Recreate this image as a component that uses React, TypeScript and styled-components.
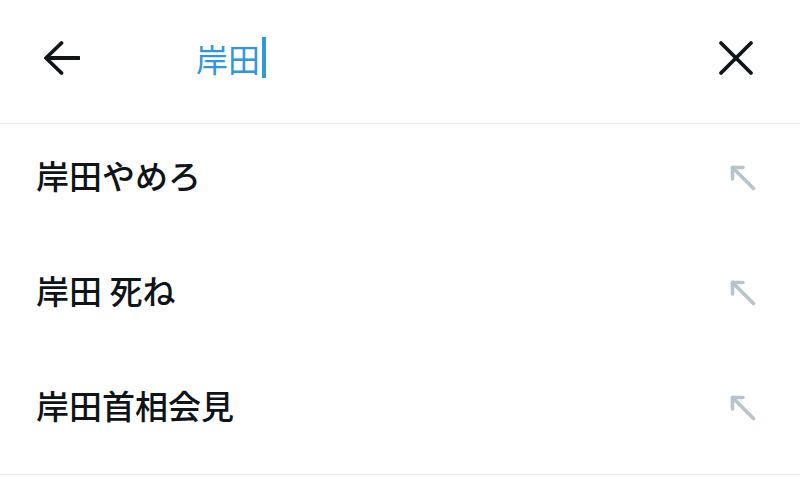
import React from "react";
import styled, { createGlobalStyle } from "styled-components";

const Global = createGlobalStyle`
  html, body { margin: 0; padding: 0; background: #ffffff; }
  body { font-family: "Noto Sans CJK JP", "Noto Sans", sans-serif; }
`;

const Page = styled.div`
  width: 800px;
  height: 483px;
  background: #fff;
  overflow: hidden;
`;

const Header = styled.header`
  height: 124px;
  box-sizing: border-box;
  padding: 0 46px 8px 44px;
  display: flex;
  align-items: center;
  border-bottom: 1px solid #eceff1;
`;

const IconButton = styled.div`
  width: 36px;
  height: 36px;
  display: flex;
  align-items: center;
  justify-content: center;
  color: #0f1419;
  flex: none;
`;

const SearchField = styled.div`
  flex: 1;
  display: flex;
  align-items: center;
  margin-left: 116px;
`;

const Query = styled.span`
  font-size: 32px;
  line-height: 40px;
  color: #2f98da;
  font-weight: 400;
`;

const Caret = styled.span`
  width: 4px;
  height: 41px;
  background: #2f98da;
  margin-left: 2px;
`;

const List = styled.ul`
  list-style: none;
  margin: 0;
  padding: 0 0 5px 0;
  border-bottom: 1px solid #eceff1;
`;

const Row = styled.li`
  height: 115px;
  box-sizing: border-box;
  padding: 0 44px 13px 36px;
  display: flex;
  align-items: center;
  justify-content: space-between;
`;

const Suggestion = styled.span`
  font-size: 33px;
  line-height: 40px;
  color: #0f1419;
  font-weight: 500;
`;

const Glyph = styled.svg`
  display: block;
`;

const BackIcon = () => (
  <Glyph width="36" height="36" viewBox="0 0 36 36" fill="none" stroke="currentColor" strokeWidth="3.8" strokeLinecap="round" strokeLinejoin="round">
    <path d="M35 18 H3" />
    <path d="M17.5 3 L2 18 L17.5 33" />
  </Glyph>
);

const CloseIcon = () => (
  <Glyph width="36" height="36" viewBox="0 0 36 36" fill="none" stroke="currentColor" strokeWidth="3.8" strokeLinecap="round">
    <path d="M3 3 L33 33" />
    <path d="M33 3 L3 33" />
  </Glyph>
);

const FillArrow = styled(Glyph)`
  color: #b6c4cc;
  margin-top: 5px;
`;

const FillInIcon = () => (
  <FillArrow width="26" height="26" viewBox="0 0 26 26" fill="none" stroke="currentColor" strokeWidth="3.6" strokeLinecap="round" strokeLinejoin="round">
    <path d="M2.5 2.5 L23.5 23.5" />
    <path d="M13 2.5 H2.5 V14" />
  </FillArrow>
);

const suggestions = ["岸田やめろ", "岸田 死ね", "岸田首相会見"];

export default function App() {
  return (
    <Page>
      <Global />
      <Header>
        <IconButton>
          <BackIcon />
        </IconButton>
        <SearchField>
          <Query>岸田</Query>
          <Caret />
        </SearchField>
        <IconButton>
          <CloseIcon />
        </IconButton>
      </Header>
      <List>
        {suggestions.map((s) => (
          <Row key={s}>
            <Suggestion>{s}</Suggestion>
            <FillInIcon />
          </Row>
        ))}
      </List>
    </Page>
  );
}
